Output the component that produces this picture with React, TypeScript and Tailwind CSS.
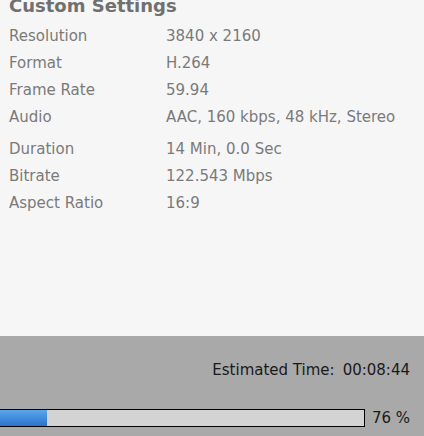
import React from "react";

const rows1 = [
  ["Resolution", "3840 x 2160"],
  ["Format", "H.264"],
  ["Frame Rate", "59.94"],
  ["Audio", "AAC, 160 kbps, 48 kHz, Stereo"],
];
const rows2 = [
  ["Duration", "14 Min, 0.0 Sec"],
  ["Bitrate", "122.543 Mbps"],
  ["Aspect Ratio", "16:9"],
];

export default function App() {
  const font = { fontFamily: '"DejaVu Sans", Tahoma, sans-serif' };
  return (
    <div className="w-[424px] h-[436px] bg-[#f6f6f6] flex flex-col overflow-hidden" style={font}>
      <div className="flex-1 flex flex-col">
        <div className="mt-[-5px] ml-[9px] h-[22px] text-[18px] leading-[22px] font-bold text-[#707070]">Custom Settings</div>
        <div className="mt-[6px] flex flex-col">
          {rows1.map(([k, v]) => (
            <div key={k} className="flex h-[27px] items-center text-[15px] text-[#7a7a7a]">
              <span className="w-[166px] pl-[9px]">{k}</span>
              <span>{v}</span>
            </div>
          ))}
        </div>
        <div className="mt-[5px] flex flex-col">
          {rows2.map(([k, v]) => (
            <div key={k} className="flex h-[27px] items-center text-[15px] text-[#7a7a7a]">
              <span className="w-[166px] pl-[9px]">{k}</span>
              <span>{v}</span>
            </div>
          ))}
        </div>
      </div>
      <div className="h-[100px] bg-[#a9a9a9] flex flex-col">
        <div className="mt-[23px] h-[22px] flex items-center justify-end pr-[14px] text-[15px] text-[#1a1a1a]">
          <span>Estimated Time:</span>
          <span className="ml-[8px]">00:08:44</span>
        </div>
        <div className="mt-[26px] flex items-center">
          <div className="w-[365px] h-[18px] border border-black bg-[#d3d3d3] border-l-0 flex">
            <div className="w-[47px] h-full bg-gradient-to-b from-[#5aa6ee] to-[#2a72cc]" />
          </div>
          <span className="ml-[7px] text-[15px] text-[#1a1a1a]">76 %</span>
        </div>
      </div>
    </div>
  );
}
